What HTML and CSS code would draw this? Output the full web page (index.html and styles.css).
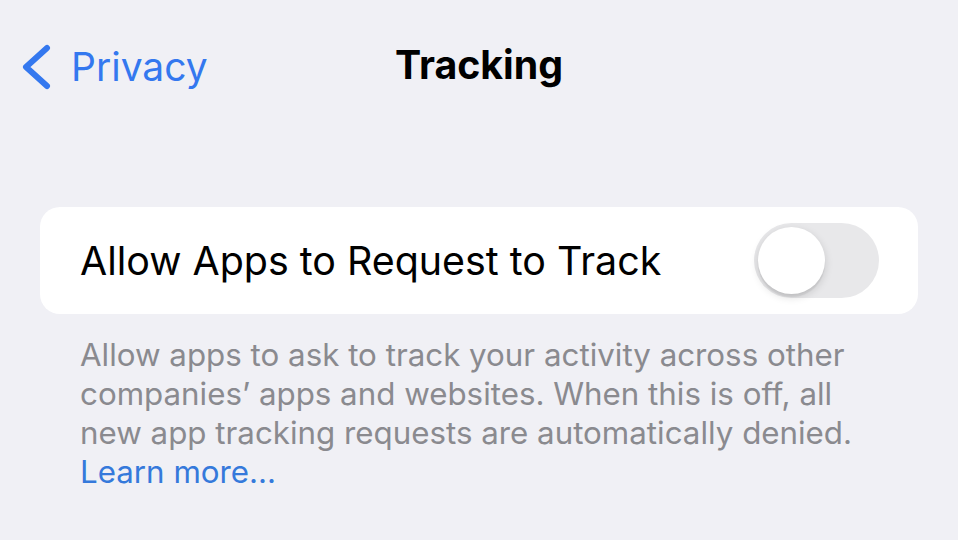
FILE: index.html
```html
<!DOCTYPE html>
<html>
<head>
<meta charset="utf-8">
<link rel="stylesheet" href="styles.css">
</head>
<body>
<div class="screen">
  <header class="nav">
    <a class="back">
      <svg class="chev" width="32" height="46" viewBox="0 0 32 46"><path d="M27 4 L6 23 L27 42" fill="none" stroke="#3478ef" stroke-width="6" stroke-linecap="round" stroke-linejoin="round"/></svg>
      <span class="back-label">Privacy</span>
    </a>
    <h1 class="title">Tracking</h1>
  </header>
  <section class="group">
    <div class="card">
      <span class="row-label">Allow Apps to Request to Track</span>
      <span class="toggle"><span class="knob"></span></span>
    </div>
    <p class="footer">Allow apps to ask to track your activity across other<br>companies’ apps and websites. When this is off, all<br>new app tracking requests are automatically denied.<br><a class="link">Learn more...</a></p>
  </section>
</div>
</body>
</html>
```
FILE: styles.css
```css
html, body {
  margin: 0;
  padding: 0;
  background: #f0f0f5;
}
body {
  width: 958px;
  height: 540px;
  overflow: hidden;
  font-family: Inter, "Liberation Sans", sans-serif;
}
.screen {
  display: flex;
  flex-direction: column;
}
.nav {
  position: relative;
  height: 134px;
  display: flex;
  align-items: flex-start;
}
.back {
  display: flex;
  align-items: center;
  margin-top: 43px;
  margin-left: 20px;
  color: #3478ef;
}
.chev {
  display: block;
}
.back-label {
  font-size: 39px;
  margin-left: 19px;
}
.title {
  position: absolute;
  left: 0;
  right: 0;
  top: 41px;
  margin: 0;
  text-align: center;
  font-size: 39.3px;
  font-weight: 700;
  color: #000;
}
.group {
  margin: 73px 40px 0 40px;
}
.card {
  background: #fff;
  border-radius: 20px;
  height: 107px;
  display: flex;
  align-items: center;
  justify-content: space-between;
  padding: 0 39px 0 40px;
  box-sizing: border-box;
}
.row-label {
  font-size: 39.4px;
  color: #000;
}
.toggle {
  width: 125px;
  height: 75px;
  border-radius: 38px;
  background: #e8e8ea;
  position: relative;
  box-sizing: border-box;
}
.knob {
  position: absolute;
  left: 4px;
  top: 4px;
  width: 67px;
  height: 67px;
  border-radius: 50%;
  background: #fff;
  box-shadow: 0 3px 8px rgba(0,0,0,0.15), 0 3px 1px rgba(0,0,0,0.06);
}
.footer {
  margin: 22px 0 0 40px;
  font-size: 31.3px;
  line-height: 39px;
  color: #8a8a8f;
  white-space: nowrap;
}
.link {
  color: #3579db;
}
```
